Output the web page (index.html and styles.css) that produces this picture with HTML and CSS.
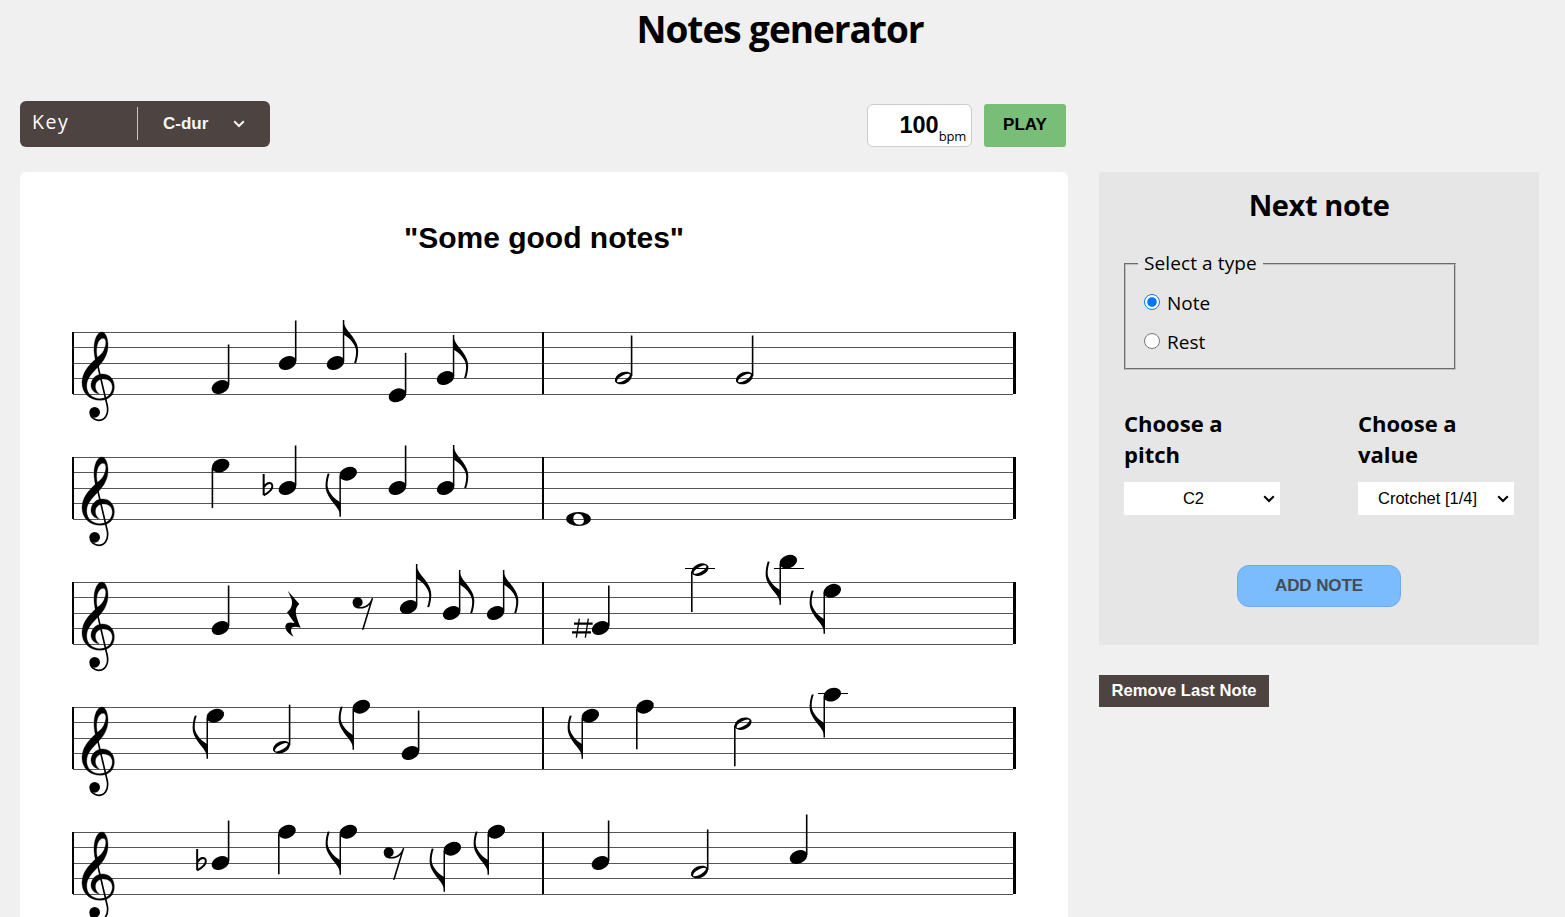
FILE: index.html
```
<!DOCTYPE html>
<html lang="en">
<head>
<meta charset="utf-8">
<title>Notes generator</title>
<link rel="stylesheet" href="styles.css">
</head>
<body>
<svg class="defs" width="0" height="0" aria-hidden="true">
  <defs>
    <g id="head"><ellipse rx="9.1" ry="6.5" transform="rotate(-22)"/></g>
    <g id="hollow"><path fill-rule="evenodd" d="M-8.4 3.4A9.1 6.4 -22 0 1 8.4 -3.4A9.1 6.4 -22 0 1 -8.4 3.4ZM-6.4 3.7A7.5 3 -30 0 0 6.4 -3.7A7.5 3 -30 0 0 -6.4 3.7Z"/></g>
    <g id="qu"><use href="#head"/><path d="M7.400 -42.500h1.600V-2h-1.600z"/></g>
    <g id="qd"><use href="#qu" transform="rotate(180)"/></g>
    <g id="hu"><use href="#hollow"/><path d="M7.400 -42.500h1.600V-2h-1.600z"/></g>
    <g id="hd"><use href="#hu" transform="rotate(180)"/></g>
    <g id="eu"><use href="#head"/><path d="M7.300 -43h1.500V-2h-1.500z"/><path d="M7.500 -43C9 -35 13 -32 17 -26.500C21 -21 22.800 -17 22.700 -12C22.600 -7 21.700 -3 20.500 .2L18.600 0C20 -4 20.900 -9 20.500 -13C19.500 -19 14 -25 8 -28.500Z"/></g>
    <g id="ed"><use href="#eu" transform="rotate(180)"/></g>
    <g id="whole"><path fill-rule="evenodd" d="M-12.300 0A12.300 7 0 0 1 12.300 0A12.300 7 0 0 1 -12.300 0ZM-2.600 -4.900C-7 -3 -5.500 5 -.5 5.600C5.500 6.300 6.500 2 4.500 -2C3 -5 .5 -6 -2.600 -4.900Z"/></g>
    <g id="er"><circle r="5"/><path d="M-4 2C-3 5.300 3.500 5.300 7.500 3.800C11 2.100 13 -1 14.200 -4.300L15.600 -4L6 27.500H4.300L12 2.500C9 5.700 6 6.300 2 6.300C-2 6.300 -4.700 4.500 -4.700 1Z"/></g>
    <g id="flat" transform="scale(.3333)"><path d="M2 0V64M3 39C12 24 28 23 28 37C28 49 16 57 2 64" fill="none" stroke="#000" stroke-width="6"/></g>
    <g id="stave">
      <path class="lines" d="M1 .5H941M1 15.500H941M1 31.500H941M1 46.500H941M1 62.500H941"/>
      <path d="M0 0h2v62h-2zM470 0h2v62h-2zM941 0h3v62h-3z"/>
      <g transform="translate(-12 -22) scale(.33333)">
        <path fill-rule="evenodd" stroke="#000" d="M106 148C101 128 101 108 104 95C108 78 116 66 126 66C138 66 144 88 144 106C144 132 132 152 116 169C96 190 80 205 80 228C80 252 98 266 120 266C142 266 156 252 157 232C157 215 145 207 131 207C117 207 106 215 106 230C106 240 112 247 118 252C102 250 93 238 93 226C93 207 108 192 127 192C150 192 163 208 163 231C163 256 145 271 121 271C88 271 66 248 66 218C66 190 84 168 106 148ZM112 142C106 118 112 86 129 85C139 85 139 100 135 112C131 126 122 136 112 142Z"/>
        <circle cx="104" cy="307" r="16"/>
        <path d="M107 140L142 288C147 316 132 331 116 331C104 331 93 322 91 312" fill="none" stroke="#000" stroke-width="5"/>
      </g>
    </g>
  </defs>
</svg>
<main class="page">
  <h1 class="title">Notes generator</h1>
  <div class="columns">
    <section class="editor">
      <div class="toolbar">
        <div class="key">
          <span class="key-label">Key</span>
          <span class="key-value">C-dur</span>
          <svg class="chevron" width="12" height="8" viewBox="0 0 12 8"><path d="M1.200 1.200L6 6L10.800 1.200"/></svg>
        </div>
        <div class="playback">
          <div class="tempo"><span class="tempo-value">100</span><span class="tempo-unit">bpm</span></div>
          <button class="play">PLAY</button>
        </div>
      </div>
      <div class="sheet">
        <h2 class="song">"Some good notes"</h2>
        <div class="staves">
          <svg class="stave" viewBox="0 0 944 63"><use href="#stave"/>
            <use href="#qu" x="148.400" y="55"/><use href="#qu" x="215.500" y="31"/><use href="#eu" x="263.500" y="31"/><use href="#qu" x="325.400" y="63.300"/><use href="#eu" x="373.500" y="46"/>
            <use href="#hu" x="551.400" y="46"/><use href="#hu" x="672.400" y="46"/>
          </svg>
          <svg class="stave" viewBox="0 0 944 63"><use href="#stave"/>
            <use href="#qd" x="148.600" y="8.600"/><use href="#flat" transform="translate(191 17)"/><use href="#qu" x="215.400" y="31"/><use href="#ed" x="276.200" y="16.700"/><use href="#qu" x="325.400" y="31"/><use href="#eu" x="373.600" y="31"/>
            <use href="#whole" x="506.500" y="62"/>
          </svg>
          <svg class="stave" viewBox="0 0 944 63"><use href="#stave"/>
            <use href="#qu" x="148.400" y="46"/>
            <path transform="translate(118 -22) scale(.33333)" d="M293 92L328 132C314 146 313 158 332 203C314 197 303 200 303 210C303 218 307 225 311 230C296 222 286 210 286 200C286 188 300 184 314 190L291 157C304 145 306 138 306 125C305 115 299 104 293 92Z"/>
            <use href="#er" x="285.600" y="20.300"/><use href="#eu" x="336.600" y="25"/><use href="#eu" x="379.600" y="31"/><use href="#eu" x="423.600" y="31"/>
            <g transform="translate(468 -42) scale(.33333)" stroke="#000"><path stroke-width="4" d="M118 236L109 293M145 236L136 293"/><path stroke-width="7" d="M102 251H158M96 277H153"/></g>
            <use href="#qu" x="528.600" y="46"/><use href="#hd" x="628" y="-12.400"/><use href="#ed" x="716.300" y="-20.300"/><use href="#ed" x="760.300" y="8.800"/>
            <path d="M613 -14h30v1h-30zM702 -14h30v1h-30z"/>
          </svg>
          <svg class="stave" viewBox="0 0 944 63"><use href="#stave"/>
            <use href="#ed" x="143.300" y="8.700"/><use href="#hu" x="209.400" y="40.200"/><use href="#ed" x="289.300" y="-.3"/><use href="#qu" x="338.400" y="46"/>
            <use href="#ed" x="518.300" y="8.700"/><use href="#qd" x="573" y="-.3"/><use href="#hd" x="671" y="16.700"/><use href="#ed" x="760.300" y="-12.400"/>
            <path d="M746 -14h30v1h-30z"/>
          </svg>
          <svg class="stave" viewBox="0 0 944 63"><use href="#stave"/>
            <use href="#flat" transform="translate(124.500 17)"/><use href="#qu" x="148.400" y="31"/><use href="#qd" x="215" y="-.3"/><use href="#ed" x="276.300" y="-.3"/><use href="#er" x="316.700" y="20.300"/><use href="#ed" x="380.300" y="16.700"/><use href="#ed" x="424.300" y="-.3"/>
            <use href="#qu" x="528.400" y="31"/><use href="#hu" x="627.500" y="40"/><use href="#qu" x="726.500" y="25"/>
          </svg>
        </div>
      </div>
    </section>
    <aside class="side">
      <div class="panel">
        <h2 class="panel-title">Next note</h2>
        <fieldset class="types">
          <legend>Select a type</legend>
          <label class="option"><input type="radio" name="type" checked><span>Note</span></label>
          <label class="option"><input type="radio" name="type"><span>Rest</span></label>
        </fieldset>
        <div class="choices">
          <div class="choice">
            <h3>Choose a pitch</h3>
            <div class="select"><span>C2</span><svg class="chevron dark" width="12" height="8" viewBox="0 0 12 8"><path d="M1.200 1.200L6 6L10.800 1.200"/></svg></div>
          </div>
          <div class="choice">
            <h3>Choose a value</h3>
            <div class="select"><span>Crotchet [1/4]</span><svg class="chevron dark" width="12" height="8" viewBox="0 0 12 8"><path d="M1.200 1.200L6 6L10.800 1.200"/></svg></div>
          </div>
        </div>
        <button class="add">ADD NOTE</button>
      </div>
      <button class="remove">Remove Last Note</button>
    </aside>
  </div>
</main>
</body>
</html>
```
FILE: styles.css
```
* { box-sizing: border-box; }
body {
  margin: 0;
  height: 917px;
  overflow: hidden;
  background: #f0f0f0;
  color: #000;
  font-family: "Open Sans", "Noto Sans", sans-serif;
}
h1, h2, h3 { margin: 0; }
button { border: 0; padding: 0; font: bold 16px "Liberation Sans", sans-serif; }
.defs { display: block; height: 0; }
.page { width: 1560px; padding: 0 20px; }
.title { height: 101px; padding-top: 3px; text-align: center; font-size: 37px; line-height: 52px; letter-spacing: -1.05px; }
.columns { display: flex; gap: 31px; align-items: flex-start; }
.editor { width: 1048px; }
.toolbar { display: flex; justify-content: space-between; height: 71px; padding-right: 2px; }
.key { display: flex; align-items: center; width: 250px; height: 46px; padding-bottom: 1px; border-radius: 6px; background: #4d4341; color: #fff; }
.key-label { width: 118px; height: 33px; padding-left: 12px; border-right: 1px solid #c9c5c3; font-size: 19.500px; line-height: 30px; letter-spacing: 1.500px; }
.key-value { width: 95px; padding-left: 25px; font: bold 17px "Liberation Sans", sans-serif; color: #f5f5f5; }
.chevron { display: block; fill: none; stroke: #f5f5f5; stroke-width: 2; }
.dark { stroke: #000; }
.playback { display: flex; gap: 12px; padding-top: 3px; }
.tempo { display: flex; justify-content: flex-end; width: 105px; height: 43px; padding-right: 5px; border: 1px solid #ccc; border-radius: 6px; background: #fff; }
.tempo-value { font: bold 23.500px/41px "Liberation Sans", sans-serif; }
.tempo-unit { font-size: 13px; line-height: 18px; padding-top: 22px; letter-spacing: -.2px; }
.play { width: 82px; height: 43px; padding-bottom: 2px; border-radius: 3px; background: #78bd78; font-size: 17px; }
.sheet { height: 745px; padding: 47px 52px 0; overflow: hidden; border-radius: 6px 6px 0 0; background: #fff; }
.song { text-align: center; font: bold 30px/38px "Liberation Sans", sans-serif; }
.staves { display: grid; gap: 62px; margin-top: 75px; }
.stave { display: block; width: 944px; height: 63px; overflow: visible; }
.lines { fill: none; stroke: #555; stroke-width: 1; }
.side { width: 440px; padding-top: 71px; }
.panel { height: 473px; padding: 13px 25px 0; background: #e6e6e6; }
.panel-title { text-align: center; font-size: 29px; line-height: 40px; letter-spacing: -.4px; }
.types { width: 332px; height: 119px; margin: 26px 0 0; padding: 6px 18px 0; border: 2px groove #c0c0c0; font-size: 19px; }
.types legend { padding: 0 6px; margin-left: -6px; line-height: 25px; letter-spacing: .1px; }
.option { display: flex; align-items: center; gap: 7px; height: 39px; line-height: 39px; }
.option span { padding-top: 3px; }
.option input { width: 16px; height: 16px; margin: 0; }
.choices { display: flex; justify-content: space-between; margin-top: 38px; }
.choice { width: 156px; }
.choice h3 { width: 120px; font-size: 22px; line-height: 31px; margin-bottom: 12px; }
.select { display: flex; align-items: center; height: 33px; padding-right: 5px; background: #fff; font: 16.500px "Liberation Sans", sans-serif; }
.select span { flex: 1; text-align: center; }
.add { display: block; width: 164px; height: 42px; margin: 50px auto 0; padding-bottom: 1px; border: 1px solid #72a9f5; border-radius: 12px; background: #7abcff; color: #444d56; font-size: 17px; letter-spacing: -.1px; }
.remove { display: block; width: 170px; height: 32px; margin-top: 30px; background: #4d4341; color: #fff; font-size: 16.600px; }
```
